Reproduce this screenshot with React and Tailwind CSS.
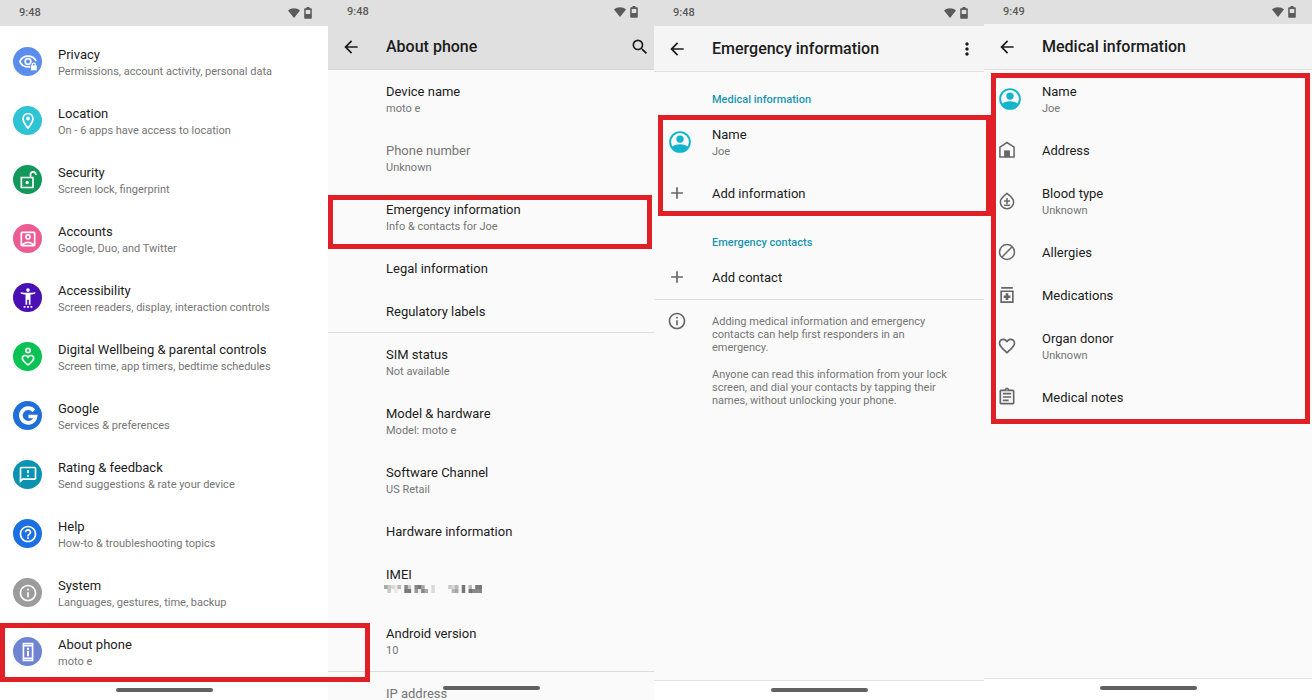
import {
  MdAdd,
  MdArrowBack,
  MdFavoriteBorder,
  MdHelpOutline,
  MdInfoOutline,
  MdMoreVert,
  MdOutlineAccountBox,
  MdOutlineAssignment,
  MdOutlineFeedback,
  MdSearch,
} from "react-icons/md";
import clsx from "clsx";

function Svg({ className = "size-5", children }) {
  return (
    <svg viewBox="0 0 24 24" className={className} fill="none" stroke="currentColor" strokeWidth="2" aria-hidden="true">
      {children}
    </svg>
  );
}

function PrivacyIcon() {
  return (
    <Svg>
      <path d="M14.5 17.6c-.8.2-1.6.3-2.5.3-4.4 0-8-2.5-9.800-6.400C4 7.600 7.600 5 12 5s8 2.500 9.800 6" />
      <circle cx="12" cy="11.4" r="3.4" />
      <path d="M15.5 16h7v6h-7z" fill="currentColor" stroke="none" />
      <path d="M17.2 16.500v-1.400a1.800 1.800 0 0 1 3.600 0v1.400" strokeWidth="1.5" />
    </Svg>
  );
}

function PinIcon() {
  return (
    <Svg>
      <path d="M12 3C8.700 3 6 5.700 6 9c0 4.500 6 11.500 6 11.500S18 13.500 18 9c0-3.300-2.700-6-6-6z" />
      <circle cx="12" cy="9" r="2.4" fill="currentColor" stroke="none" />
    </Svg>
  );
}

function UnlockIcon() {
  return (
    <Svg>
      <path d="M4 9h14v12H4zM15 9V5.500a3.200 3.200 0 0 1 6.400 0V6" />
      <circle cx="11" cy="15" r="2" fill="currentColor" stroke="none" />
    </Svg>
  );
}

function AccessibilityIcon() {
  return (
    <Svg>
      <g fill="currentColor" stroke="none">
        <circle cx="12" cy="2.5" r="2.2" />
        <path d="M20.500 6.800c-2.600.7-5.600 1-8.500 1s-5.900-.3-8.500-1L3 5c2.700.6 5.800.8 9 .8s6.300-.2 9-.8z" />
        <path d="M9 6.500h6V20h-2v-6h-2v6H9z" />
        <path d="M6.800 21.700H9v2H6.800zM10.900 21.700h2.200v2h-2.200zM15 21.700h2.200v2H15z" />
      </g>
    </Svg>
  );
}

function WellbeingIcon() {
  return (
    <Svg>
      <circle cx="12" cy="4.2" r="2.6" />
      <path d="M12 21.500c-4-3.200-6.800-5.200-6.800-8 0-3.600 4.800-4.600 6.800-1.300 2-3.300 6.800-2.300 6.800 1.300 0 2.800-2.800 4.800-6.800 8z" />
    </Svg>
  );
}

function GoogleIcon() {
  return (
    <Svg className="size-[22px]">
      <path d="M18.400 6.300A8 8 0 1 0 20.200 12.500H12.500" strokeWidth="4" />
    </Svg>
  );
}

function PhoneInfoIcon() {
  return (
    <Svg>
      <path d="M6.500 2h11v20h-11zM6.500 4.500h11M6.500 19.500h11" />
      <path d="M12 7v2.200M12 10.500v6.500" strokeWidth="2.5" />
    </Svg>
  );
}

function PersonIcon() {
  return (
    <Svg className="size-[26px] text-[#12b5cb]">
      <circle cx="12" cy="12" r="9.1" strokeWidth="1.8" />
      <circle cx="12" cy="9.3" r="3.4" fill="currentColor" stroke="none" />
      <path d="M4.500 16.500c1.700-1.700 4.300-2.500 7.500-2.500s5.800.8 7.500 2.500a8.800 8.800 0 0 1-15 0z" fill="currentColor" stroke="none" />
    </Svg>
  );
}

function HomeIcon() {
  return (
    <Svg>
      <path d="M3.500 20.500V8.500L12 3l8.500 5.500v12z" strokeWidth="1.800" />
      <path d="M8.500 12.500h7v8h-7z" fill="currentColor" stroke="none" />
    </Svg>
  );
}

function BloodIcon() {
  return (
    <Svg>
      <path d="M12 2.800c5 3.700 8 7 8 10.500a8 8 0 0 1-16 0c0-3.500 3-6.800 8-10.500z" strokeWidth="1.8" />
      <path d="M8.500 12h7M12 8.500v7M8.500 17.200h7" strokeWidth="1.8" />
    </Svg>
  );
}

function AllergyIcon() {
  return (
    <Svg>
      <circle cx="12" cy="12" r="9" strokeWidth="1.8" />
      <path d="M5.800 18.200 18.200 5.800" strokeWidth="1.8" />
    </Svg>
  );
}

function MedicationIcon() {
  return (
    <Svg>
      <path d="M5 3.500h14M5 7.500h14v13H5z" />
      <path d="M12 10v8M8 14h8" strokeWidth="3" />
    </Svg>
  );
}

const SETTINGS = [
  { title: "Privacy", detail: "Permissions, account activity, personal data", color: "bg-[#5b8dec]", icon: <PrivacyIcon /> },
  { title: "Location", detail: "On - 6 apps have access to location", color: "bg-[#30c3d6]", icon: <PinIcon /> },
  { title: "Security", detail: "Screen lock, fingerprint", color: "bg-[#12985a]", icon: <UnlockIcon /> },
  { title: "Accounts", detail: "Google, Duo, and Twitter", color: "bg-[#ec5c94]", icon: <MdOutlineAccountBox className="size-5" /> },
  { title: "Accessibility", detail: "Screen readers, display, interaction controls", color: "bg-[#4b10b4]", icon: <AccessibilityIcon /> },
  { title: "Digital Wellbeing & parental controls", detail: "Screen time, app timers, bedtime schedules", color: "bg-[#08c253]", icon: <WellbeingIcon /> },
  { title: "Google", detail: "Services & preferences", color: "bg-[#1f6fd8]", icon: <GoogleIcon /> },
  { title: "Rating & feedback", detail: "Send suggestions & rate your device", color: "bg-[#0a92b2]", icon: <MdOutlineFeedback className="size-5" /> },
  { title: "Help", detail: "How-to & troubleshooting topics", color: "bg-[#1b6fe0]", icon: <MdHelpOutline className="size-5" /> },
  { title: "System", detail: "Languages, gestures, time, backup", color: "bg-[#9c9c9c]", icon: <MdInfoOutline className="size-5" /> },
  { title: "About phone", detail: "moto e", color: "bg-[#6f83d3]", icon: <PhoneInfoIcon />, marked: true },
];

const MEDICAL = [
  { title: "Name", detail: "Joe", icon: <PersonIcon /> },
  { title: "Address", icon: <HomeIcon /> },
  { title: "Blood type", detail: "Unknown", icon: <BloodIcon /> },
  { title: "Allergies", icon: <AllergyIcon /> },
  { title: "Medications", icon: <MedicationIcon /> },
  { title: "Organ donor", detail: "Unknown", icon: <MdFavoriteBorder className="size-5" /> },
  { title: "Medical notes", icon: <MdOutlineAssignment className="size-5" /> },
];

// grey level of each block of the redacted serial, 0 is empty
const REDACTED = [
  [5, 3, 2, 1, 4, 0, 7, 3, 0, 7, 8, 5, 0, 0, 2, 0, 0, 0, 0, 3, 2, 4, 0, 8, 0, 4, 0, 8, 8],
  [0, 3, 0, 1, 0, 0, 8, 8, 0, 6, 1, 7, 5, 0, 2, 0, 0, 0, 0, 0, 4, 5, 0, 8, 0, 8, 7, 7, 7],
];

function RedactedNumber() {
  return (
    <svg viewBox="0 0 98 18" className="-ml-0.5 block h-[18px] w-[98px]" role="img" aria-label="Hidden number">
      {REDACTED.map((line, y) =>
        line.map((level, x) => (
          <rect
            key={`${x}-${y}`}
            x={x * 3.38}
            y={2 + y * 4}
            width="3.5"
            height="4"
            fill="#555"
            opacity={level * 0.1}
          />
        )),
      )}
    </svg>
  );
}

function StatusBar({ time, raised }) {
  return (
    <div className={clsx("flex shrink-0 items-center justify-between bg-[#e0e0e0] pr-4 pl-[19px] text-[#5a5a5a]", raised ? "h-6" : "h-[26px]")}>
      <span className="text-[11px] font-medium">{time}</span>
      <span className="flex items-center gap-1">
        <svg viewBox="0 0 12 10" className="h-2.5 w-3" fill="currentColor" aria-hidden="true">
          <path d="M0 2.500C1.700 1 3.700.2 6 .2s4.300.8 6 2.300L6 10z" />
        </svg>
        <svg viewBox="0 0 8 12" className="h-3 w-2" fill="currentColor" aria-hidden="true">
          <path d="M2.500 0h3v1.200H7c.5 0 .8.3.8.8v9c0 .5-.3.8-.8.8H1c-.5 0-.8-.3-.8-.8V2c0-.5.3-.8.8-.8h1.500zM1.700 3v4h4.600V3z" fillRule="evenodd" />
        </svg>
      </span>
    </div>
  );
}

function NavHandle({ raised, bordered, floating }) {
  return (
    <div
      className={clsx(
        "flex shrink-0 justify-center border-t pt-[7px]",
        raised ? "h-[22px]" : "h-5",
        bordered ? "border-[#e2e2e2] bg-white" : "border-transparent",
        floating && "absolute inset-x-0 bottom-0",
      )}
    >
      <span className="h-1 w-[97px] rounded-full bg-[#616161]" />
    </div>
  );
}

function AppBar({ title, action, dark }) {
  return (
    <header
      className={clsx(
        "flex h-[46px] shrink-0 items-center border-b pl-[13px] text-[#1c1c1c]",
        dark ? "border-[#d6d6d6] bg-[#e0e0e0] pr-1" : "border-[#e2e2e2] bg-[#f5f5f5] pr-[7px]",
      )}
    >
      <button type="button" aria-label="Back" className="w-[45px]">
        <MdArrowBack className="size-5" />
      </button>
      <h1 className="flex-1 text-base font-medium">{title}</h1>
      {action}
    </header>
  );
}

function Row({ title, detail, icon, color, muted, mark }) {
  return (
    <li className="relative">
      <button type="button" className="flex w-full items-center py-[13px] pr-2 pl-[13px] text-left">
        <span className="-mt-2.5 -mb-2 flex w-[45px] shrink-0 text-[#666]">
          {color ? (
            <span className={clsx("flex size-[29px] items-center justify-center rounded-full text-white", color)}>{icon}</span>
          ) : (
            icon
          )}
        </span>
        <span className="block">
          <span className={clsx("block text-[13px] leading-[17px]", muted ? "text-[#757575]" : "text-[#1c1c1c]")}>{title}</span>
          {detail && <span className="-mb-0.5 block text-[11px] leading-[18px] text-[#757575]">{detail}</span>}
        </span>
      </button>
      {mark}
    </li>
  );
}

function Mark({ className }) {
  return <span className={clsx("pointer-events-none absolute z-10 border-[5px] border-[#e01f27]", className)} />;
}

function SectionLabel({ children }) {
  return <h2 className="h-[41px] pt-5 pl-[58px] text-[11px] leading-4 font-medium text-[#1a95b0]">{children}</h2>;
}

export default function App() {
  return (
    <main className="grid h-screen grid-cols-[328fr_326fr_330fr_328fr] overflow-hidden bg-white font-['Roboto',sans-serif]">
      <section className="relative z-10 flex min-h-0 min-w-0 flex-col">
        <StatusBar time="9:48" />
        <ul className="min-h-0 flex-1 pt-[7px]">
          {SETTINGS.map(({ marked, ...item }) => (
            <Row key={item.title} {...item} mark={marked && <Mark className="inset-y-0 -right-[42px] left-0" />} />
          ))}
        </ul>
        <NavHandle />
      </section>

      <section className="relative flex min-h-0 min-w-0 flex-col bg-[#fafafa]">
        <StatusBar time="9:48" raised />
        <AppBar
          title="About phone"
          dark
          action={
            <button type="button" aria-label="Search">
              <MdSearch className="size-5" />
            </button>
          }
        />
        <div className="min-h-0 flex-1 overflow-hidden">
          <ul>
            <Row title="Device name" detail="moto e" />
            <Row title="Phone number" detail="Unknown" muted />
            <Row
              title="Emergency information"
              detail="Info & contacts for Joe"
              mark={<Mark className="top-[7px] right-0.5 -bottom-0.5 left-0" />}
            />
            <Row title="Legal information" />
            <Row title="Regulatory labels" />
          </ul>
          <ul className="-mt-px border-y border-[#dcdcdc]">
            <Row title="SIM status" detail="Not available" />
            <Row title="Model & hardware" detail="Model: moto e" />
            <Row title="Software Channel" detail="US Retail" />
            <Row title="Hardware information" />
            <Row title="IMEI" detail={<RedactedNumber />} />
            <Row title="Android version" detail="10" />
          </ul>
          <ul>
            <Row title="IP address" muted />
          </ul>
        </div>
        <NavHandle raised floating />
      </section>

      <section className="relative z-10 flex min-h-0 min-w-0 flex-col bg-[#fafafa]">
        <StatusBar time="9:48" />
        <AppBar
          title="Emergency information"
          action={
            <button type="button" aria-label="More options">
              <MdMoreVert className="size-5" />
            </button>
          }
        />
        <div className="min-h-0 flex-1">
          <SectionLabel>Medical information</SectionLabel>
          <div className="relative">
            <ul>
              <Row title="Name" detail="Joe" icon={<PersonIcon />} />
              <Row title="Add information" icon={<MdAdd className="size-5" />} />
            </ul>
            <Mark className="top-0.5 -right-[7px] -bottom-px left-1" />
          </div>
          <SectionLabel>Emergency contacts</SectionLabel>
          <ul className="border-b border-[#dcdcdc]">
            <Row title="Add contact" icon={<MdAdd className="size-5" />} />
          </ul>
          <div className="flex pt-[15px] pr-8 pl-[13px] text-[#757575]">
            <div className="-mt-1 w-[45px] shrink-0 text-[#666]">
              <MdInfoOutline className="size-5" />
            </div>
            <div className="space-y-3.5 text-[11px] leading-[13px]">
              <p>Adding medical information and emergency contacts can help first responders in an emergency.</p>
              <p>
                Anyone can read this information from your lock screen, and dial your contacts by tapping their
                names, without unlocking your phone.
              </p>
            </div>
          </div>
        </div>
        <NavHandle bordered />
      </section>

      <section className="relative flex min-h-0 min-w-0 flex-col bg-[#fafafa]">
        <StatusBar time="9:49" raised />
        <AppBar title="Medical information" />
        <div className="min-h-0 flex-1">
          <div className="relative">
            <ul>
              {MEDICAL.map((item) => (
                <Row key={item.title} {...item} />
              ))}
            </ul>
            <Mark className="top-[3px] right-0.5 -bottom-[5px] left-[7px]" />
          </div>
        </div>
        <NavHandle raised bordered />
      </section>
    </main>
  );
}
